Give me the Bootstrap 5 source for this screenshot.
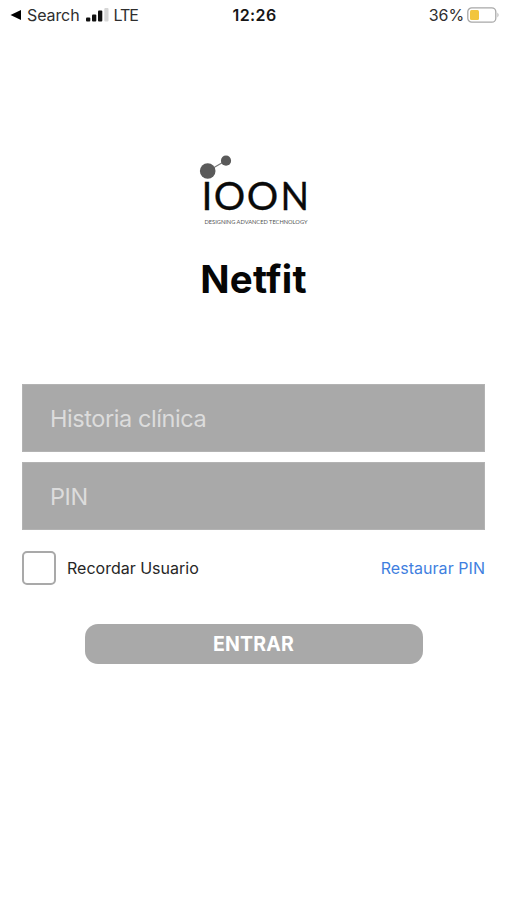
<!DOCTYPE html>
<html lang="es">
<head>
<meta charset="utf-8">
<meta name="viewport" content="width=device-width, initial-scale=1">
<title>Netfit</title>
<link href="https://cdn.jsdelivr.net/npm/bootstrap@5.3.0/dist/css/bootstrap.min.css" rel="stylesheet">
<style>
  body { font-family: Inter, "Liberation Sans", sans-serif; color: #0b0b0b; }
  .screen { min-height: 900px; }
  .status-bar { height: 30px; padding: 0 7px 0 10px; font-size: 16px; line-height: 30px; color: #2e2e2e; }
  .status-side { flex: 1 1 0; }
  .status-search { letter-spacing: -.1px; margin: 0 6px 0 5px; }
  .status-net { letter-spacing: -1.1px; margin-left: 5px; }
  .status-time { font-weight: 600; letter-spacing: .4px; color: #161616; margin-left: -1px; }
  .status-level { letter-spacing: -.1px; margin-right: 3px; }
  .brand { padding-top: 120px; }
  .brand-title { font-size: 38.5px; line-height: 46px; font-weight: 700; letter-spacing: .2px; font-variant-ligatures: none; color: #060606; margin-top: 26px; }
  .login { padding: 82px 22px 0; }
  .login .field { height: 68px; padding: 0 27px; border: 1px solid #b3b3b3; border-radius: 0; background: #a9a9a9; color: #fff; font-size: 23.5px; letter-spacing: -.42px; }
  .login .field::placeholder { color: #dcdcdc; opacity: 1; }
  .login .field + .field { margin-top: 10px; }
  .options { margin-top: 20px; height: 35px; font-size: 16px; }
  .login .remember { width: 34px; height: 34px; margin: 0; border: 2px solid #a9a9a9; border-radius: 5px; }
  .remember-label { margin-left: 11px; color: #262626; }
  .restore { color: #3f7fe0; letter-spacing: .05px; }
  .login .enter { width: 338px; height: 40px; margin-top: 39px; padding: 1px 0 0; border: 0; border-radius: 13px; background: #a9a9a9; color: #fff; font-size: 19.5px; font-weight: 700; line-height: 39px; letter-spacing: .2px; }
</style>
</head>
<body class="bg-white">
<main class="screen d-flex flex-column">
  <header class="status-bar d-flex align-items-center">
    <div class="status-side d-flex align-items-center">
      <svg width="12" height="12" viewBox="0 0 12 12"><path d="M.5 6 11 1v10z" fill="#000"/></svg>
      <span class="status-search">Search</span>
      <svg width="23" height="16" viewBox="0 0 23 16"><g fill="#111"><rect x="0" y="10.500" width="4.3" height="4" rx="1"/><rect x="6" y="7.5" width="4.3" height="7" rx="1"/><rect x="12" y="3.500" width="4.3" height="11" rx="1"/></g><rect x="18.3" y="1" width="4.2" height="13.500" rx="1" fill="#d6d6d6"/></svg>
      <span class="status-net">LTE</span>
    </div>
    <div class="status-time">12:26</div>
    <div class="status-side d-flex align-items-center justify-content-end">
      <span class="status-level">36%</span>
      <svg width="33" height="16" viewBox="0 0 33 16"><rect x=".8" y=".8" width="28" height="14.4" rx="4" fill="#fff" stroke="#a8a8a8" stroke-width="1.3"/><rect x="3" y="3" width="9" height="10" rx="1.5" fill="#f2c53d"/><path d="M30.5 5.5q2 2.500 0 5z" fill="#a8a8a8"/></svg>
    </div>
  </header>

  <section class="brand text-center">
    <svg class="d-block mx-auto" width="130" height="80" viewBox="189 150 130 80" role="img" aria-label="IOON">
      <path d="M208 171 226 160.500" stroke="#777" stroke-width="1.2"/>
      <circle cx="207.700" cy="171" r="7.800" fill="#5a5a5a"/>
      <circle cx="226" cy="160.700" r="5.100" fill="#5a5a5a"/>
      <g font-family="Lato, sans-serif" font-size="39" fill="#0a0a0a" stroke="#0a0a0a" stroke-width=".3">
        <text x="201.500" y="209.500">I</text><text x="213.700" y="209.500" textLength="31.500" lengthAdjust="spacingAndGlyphs">O</text><text x="246.700" y="209.500" textLength="31.500" lengthAdjust="spacingAndGlyphs">O</text><text x="280.500" y="209.500" textLength="28.500" lengthAdjust="spacingAndGlyphs">N</text>
      </g>
      <text x="204.500" y="224.300" font-family="Lato, sans-serif" font-size="6" fill="#555" textLength="103" lengthAdjust="spacingAndGlyphs">DESIGNING ADVANCED TECHNOLOGY</text>
    </svg>
    <h1 class="brand-title mb-0">Netfit</h1>
  </section>

  <form class="login">
    <input class="form-control field" type="text" placeholder="Historia clínica">
    <input class="form-control field" type="password" placeholder="PIN">
    <div class="options d-flex align-items-center">
      <input class="form-check-input remember" type="checkbox" id="remember">
      <label class="remember-label" for="remember">Recordar Usuario</label>
      <a class="restore text-decoration-none ms-auto" href="#">Restaurar PIN</a>
    </div>
    <button class="btn enter d-block mx-auto" type="button">ENTRAR</button>
  </form>
</main>
<script src="https://cdn.jsdelivr.net/npm/bootstrap@5.3.0/dist/js/bootstrap.bundle.min.js"></script>
</body>
</html>
